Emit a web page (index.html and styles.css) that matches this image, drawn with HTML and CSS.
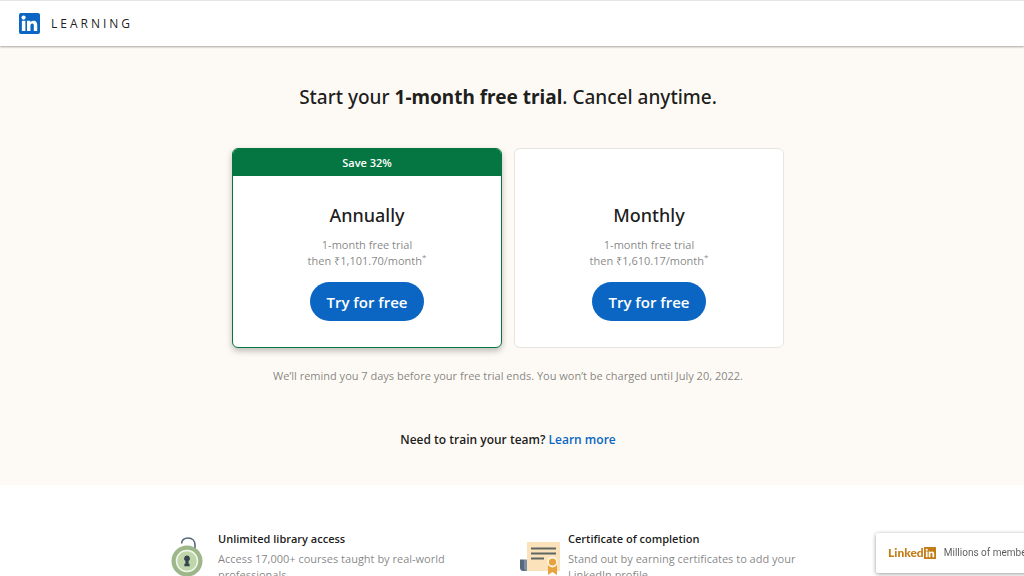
FILE: index.html
```html
<!doctype html>
<html lang="en">

<head>
  <meta charset="UTF-8" />
  <meta name="viewport" content="width=device-width, initial-scale=1.0" />
  <title>LinkedIn Learning</title>
  <link rel="stylesheet" href="styles.css">
</head>

<body>
  <header class="navbar">
    <svg class="navbar-logo" viewBox="0 0 22 22" aria-label="LinkedIn">
      <rect width="22" height="22" rx="2" fill="#0a66c2" />
      <circle cx="4.800" cy="4.800" r="2.200" fill="#fff" />
      <path fill="#fff"
        d="M3 8.200h3.700v10.600H3zM8.400 8.200h3.500v1.500c.5-.9 1.600-1.700 3.200-1.700 3.100 0 4 2 4 4.800v6h-3.600v-5.300c0-1.400-.2-2.400-1.600-2.400s-1.900 1-1.900 2.300v5.400H8.400z" />
    </svg>
    <span class="navbar-title">LEARNING</span>
  </header>

  <main>
    <section class="hero">
      <h1 class="hero-title">Start your <strong>1-month free trial</strong>. Cancel anytime.</h1>

      <div class="plans">
        <article class="plan plan-selected">
          <div class="plan-banner">Save 32%</div>
          <div class="plan-body">
            <h2 class="plan-name">Annually</h2>
            <p class="plan-price">1-month free trial<br>then ₹1,101.70/month<sup>*</sup></p>
            <button class="plan-button" type="button">Try for free</button>
          </div>
        </article>
        <article class="plan">
          <div class="plan-banner"></div>
          <div class="plan-body">
            <h2 class="plan-name">Monthly</h2>
            <p class="plan-price">1-month free trial<br>then ₹1,610.17/month<sup>*</sup></p>
            <button class="plan-button" type="button">Try for free</button>
          </div>
        </article>
      </div>

      <p class="reminder">We’ll remind you 7 days before your free trial ends. You won’t be charged until July 20, 2022.</p>
      <p class="team">Need to train your team? <a href="#">Learn more</a></p>
    </section>

    <section class="features">
      <div class="feature">
        <svg class="feature-icon" viewBox="0 0 40 40">
          <path d="M11.500 7.500C12 3.500 15 2 18 2c4.500 0 7 3 7 7v3" fill="none" stroke="#56687a" stroke-width="1.600" />
          <circle cx="17" cy="25" r="15.500" fill="#9db78b" />
          <circle cx="17" cy="25" r="10.500" fill="#bfd6aa" stroke="#f2f7ec" stroke-width="1.500" />
          <path d="M17 19.500a3 3 0 0 1 1.600 5.500v2.800h1v2.400h-5.200v-2.400h1V25A3 3 0 0 1 17 19.500z" fill="#38434f" />
        </svg>
        <div class="feature-text">
          <h3>Unlimited library access</h3>
          <p>Access 17,000+ courses taught by real-world professionals</p>
        </div>
      </div>
      <div class="feature">
        <svg class="feature-icon" viewBox="0 0 40 40">
          <path d="M7 6h33v29H7z" fill="#fce2ba" />
          <path d="M0 23.500h4V32h3v3H3.500A3.500 3.500 0 0 1 0 31.500z" fill="#56687a" />
          <path d="M4 23.500h3V35c-2 0-3-1-3-3z" fill="#788fa5" />
          <path d="M11 12.500h25M11 17.500h25M11 22.500h13" stroke="#5e6664" stroke-width="2" />
          <path d="M28 28h9v11l-4.500-3-4.500 3z" fill="#e7a33e" />
          <circle cx="32.500" cy="26" r="4.500" fill="#e7a33e" stroke="#fdf3e1" stroke-width="1.800" />
        </svg>
        <div class="feature-text">
          <h3>Certificate of completion</h3>
          <p>Stand out by earning certificates to add your LinkedIn profile</p>
        </div>
      </div>
    </section>
  </main>

  <aside class="toast">
    <span class="toast-brand">Linked<svg viewBox="0 0 22 22" aria-label="in">
        <rect width="22" height="22" rx="1" fill="#c37d16" />
        <circle cx="5" cy="5" r="2" fill="#fff" />
        <path fill="#fff"
          d="M3.400 8.300h3.200v10.300H3.400zM8.600 8.300h3v1.500c.5-.9 1.600-1.700 3.200-1.700 3.100 0 3.900 2 3.900 4.800v5.700h-3.200v-5.100c0-1.400-.2-2.600-1.800-2.600s-1.900 1.200-1.900 2.500v5.200H8.600z" />
      </svg></span>
    <span class="toast-text">Millions of members</span>
  </aside>
</body>

</html>
```
FILE: styles.css
```css
:root {
  --blue: #0a66c2;
  --green: #057642;
  --gold: #c37d16;
  --cream: #fdfaf5;
  --text: rgba(0, 0, 0, 0.9);
  --text-muted: rgba(0, 0, 0, 0.5);
  --border: #e8e6e2;
}

* {
  margin: 0;
  padding: 0;
  box-sizing: border-box;
}

body {
  font-family: "Open Sans", "Noto Sans", sans-serif;
  font-size: 11px;
  line-height: 16px;
  color: var(--text);
  background: #fff;
  height: 100vh;
  overflow: hidden;
}

.navbar {
  position: relative;
  display: flex;
  align-items: center;
  gap: 11px;
  height: 46px;
  padding: 0 19px;
  background: #fff;
  border-top: 1px solid #e6e6e6;
  box-shadow: 0 1px 2px rgba(0, 0, 0, 0.35);
}

.navbar-logo {
  width: 21px;
  height: 21px;
}

.navbar-title {
  font-size: 12px;
  font-weight: 500;
  letter-spacing: 3px;
}

.hero {
  display: flex;
  flex-direction: column;
  align-items: center;
  padding: 37px 8px 37px 0;
  background: var(--cream);
  text-align: center;
}

.hero-title {
  font-family: "Noto Sans", sans-serif;
  font-size: 19px;
  font-weight: 500;
  line-height: 28px;
}

.hero-title strong {
  font-weight: 700;
}

.plans {
  display: grid;
  grid-template-columns: 270px 270px;
  gap: 12px;
  margin-top: 37px;
}

.plan {
  background: #fff;
  border: 1px solid var(--border);
  border-radius: 6px;
  overflow: hidden;
}

.plan-selected {
  border-color: var(--green);
  box-shadow: 0 3px 6px rgba(0, 0, 0, 0.25);
}

.plan-banner {
  height: 27px;
  font-weight: 600;
  line-height: 27px;
  color: #fff;
}

.plan-selected .plan-banner {
  background: var(--green);
}

.plan-body {
  padding: 25px 16px 26px;
}

.plan-name {
  font-family: "Noto Sans", sans-serif;
  font-size: 18px;
  font-weight: 500;
  line-height: 28px;
}

.plan-price {
  margin-top: 8px;
  color: var(--text-muted);
}

.plan-price sup {
  font-size: 8px;
  line-height: 0;
}

.plan-button {
  height: 39px;
  margin-top: 13px;
  padding: 0 16px;
  border: none;
  border-radius: 20px;
  background: var(--blue);
  color: #fff;
  font: 600 15px/24px "Open Sans", "Noto Sans", sans-serif;
  cursor: pointer;
}

.plan-button:hover {
  background: #004182;
}

.reminder {
  margin-top: 20px;
  color: var(--text-muted);
}

.team {
  margin-top: 48px;
  font-size: 12px;
  font-weight: 600;
}

.team a {
  color: var(--blue);
  text-decoration: none;
}

.team a:hover {
  text-decoration: underline;
}

.features {
  display: grid;
  grid-template-columns: repeat(2, 350px);
  justify-content: center;
  padding: 46px 8px 46px 24px;
}

.feature {
  display: flex;
  gap: 8px;
}

.feature-icon {
  flex: none;
  width: 40px;
  height: 40px;
  margin-top: 5px;
}

.feature-text {
  width: 230px;
}

.feature-text h3 {
  font-size: 11px;
  font-weight: 600;
}

.feature-text p {
  margin-top: 4px;
  color: var(--text-muted);
}

.toast {
  position: fixed;
  left: calc(100% - 148px);
  bottom: 3px;
  display: flex;
  align-items: center;
  gap: 8px;
  width: 300px;
  height: 40px;
  padding: 0 12px;
  background: #fff;
  border-radius: 2px;
  box-shadow: 0 1px 4px rgba(0, 0, 0, 0.4);
  white-space: nowrap;
}

.toast-brand {
  display: flex;
  align-items: center;
  font-family: Lato, sans-serif;
  font-size: 12px;
  font-weight: 900;
  color: var(--gold);
}

.toast-brand svg {
  width: 12px;
  height: 12px;
}

.toast-text {
  font-family: Roboto, sans-serif;
  font-size: 10px;
  color: rgba(0, 0, 0, 0.65);
}
```
